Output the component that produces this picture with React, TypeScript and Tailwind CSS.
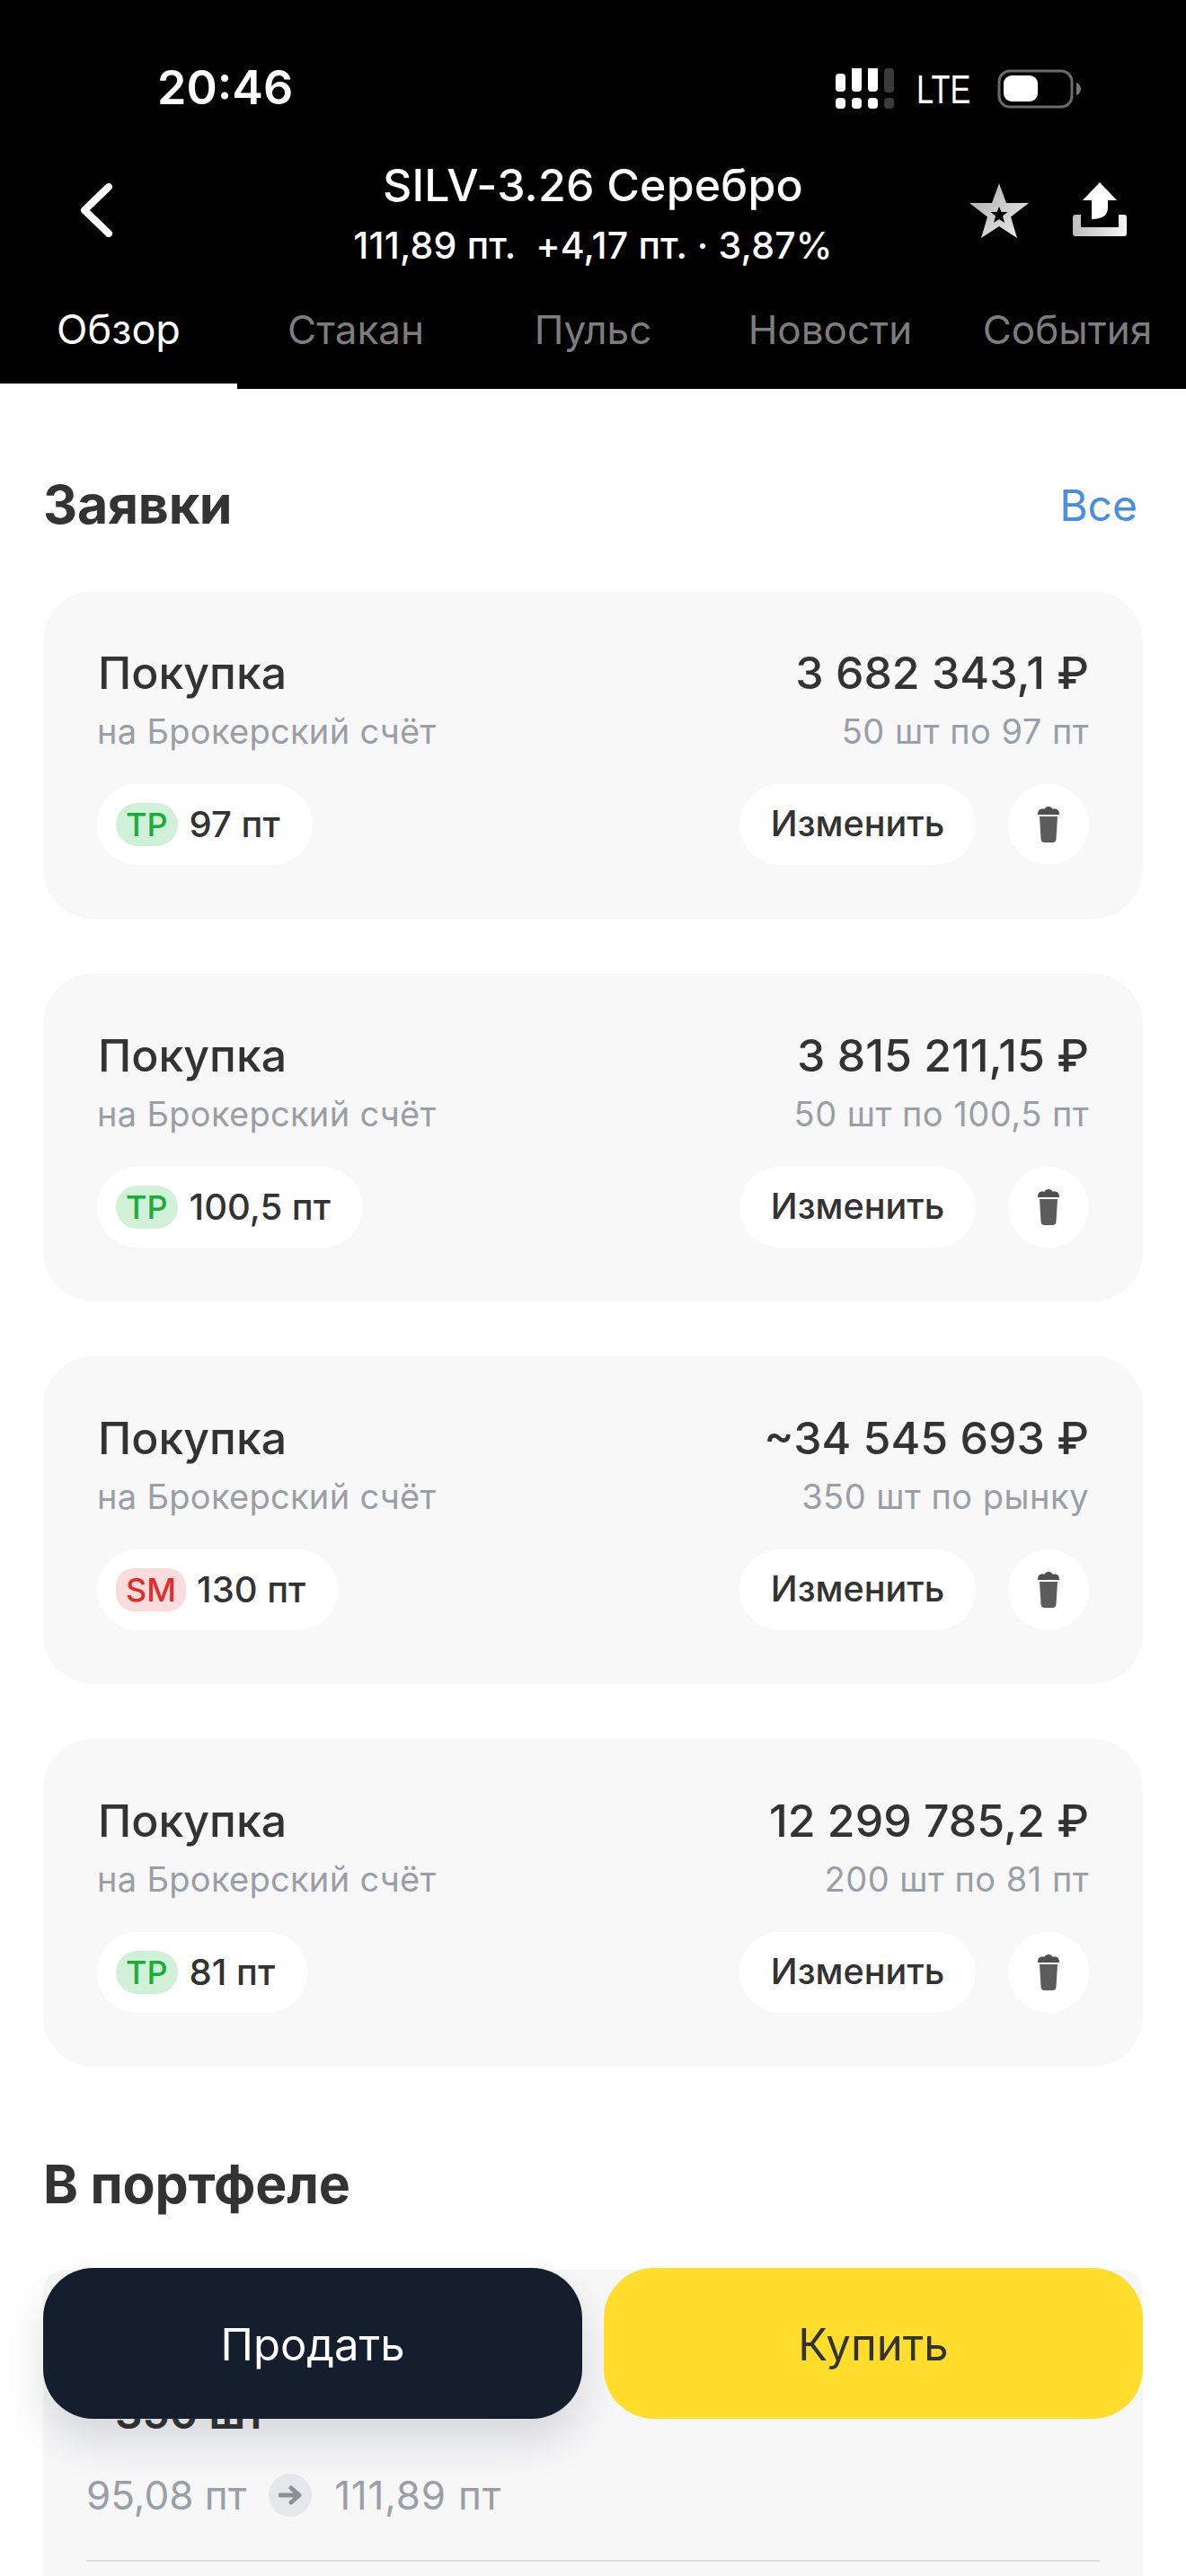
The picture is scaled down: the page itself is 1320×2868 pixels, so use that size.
const font = { fontFamily: '"Inter", "Noto Sans", sans-serif' };

const orders = [
  { amount: '3 682 343,1 ₽', sub: '50 шт по 97 пт', tag: 'TP', price: '97 пт' },
  { amount: '3 815 211,15 ₽', sub: '50 шт по 100,5 пт', tag: 'TP', price: '100,5 пт' },
  { amount: '~34 545 693 ₽', sub: '350 шт по рынку', tag: 'SM', price: '130 пт' },
  { amount: '12 299 785,2 ₽', sub: '200 шт по 81 пт', tag: 'TP', price: '81 пт' },
];

function Signal() {
  const white = [
    [0, 23, 11, 20], [18, 14, 11, 29], [36, 5, 11, 38],
    [0, 50, 11, 12], [18, 50, 11, 12], [36, 50, 11, 12],
  ];
  return (
    <svg width="66" height="46" viewBox="0 0 66 46" className="block">
      <g transform="translate(0 -17)">
        {white.map(([x, y, w, h], i) => (
          <rect key={i} x={x} y={y} width={w} height={h} rx="4" fill="#fff" />
        ))}
        <rect x="54" y="17" width="11" height="27" rx="4" fill="#3a3a3a" />
        <rect x="54" y="50" width="11" height="12" rx="4" fill="#3a3a3a" />
      </g>
    </svg>
  );
}

function Battery() {
  return (
    <svg width="93" height="44" viewBox="0 0 93 44" className="block">
      <rect x="2" y="2" width="81" height="40" rx="12" fill="none" stroke="#6a6a6a" strokeWidth="3" />
      <rect x="7" y="7" width="38" height="29" rx="9" fill="#fff" />
      <path d="M88 15 C91 16 93 19 93 22 C93 25 91 28 88 29 Z" fill="#777" />
    </svg>
  );
}

function Star() {
  return (
    <svg width="68" height="64" viewBox="0 0 68 64" className="block">
      <defs>
        <linearGradient id="starG" x1="0" y1="0" x2="1" y2="1">
          <stop offset="0" stopColor="#a8a8a8" />
          <stop offset="1" stopColor="#f0f0f0" />
        </linearGradient>
      </defs>
      <path
        fillRule="evenodd"
        d="M33 1 L41 23 L66 23 L46 38.5 L53 62 L33 49 L13 62 L20 38.5 L0 23 L25 23 Z M33 27 L35.5 33 L42.5 33 L37 37.5 L39 45 L33 41 L27 45 L29 37.5 L23.5 33 L30.5 33 Z"
        fill="url(#starG)"
      />
    </svg>
  );
}

function Share() {
  return (
    <svg width="60" height="60" viewBox="0 0 60 60" className="block">
      <defs>
        <linearGradient id="shareG" x1="0" y1="0" x2="1" y2="0">
          <stop offset="0" stopColor="#bdbdbd" />
          <stop offset="1" stopColor="#f5f5f5" />
        </linearGradient>
      </defs>
      <path d="M0 39 a3 3 0 0 1 3 -3 h6 v14 h42 v-14 h6 a3 3 0 0 1 3 3 v18 a3 3 0 0 1 -3 3 h-54 a3 3 0 0 1 -3 -3 Z" fill="url(#shareG)" />
      <path d="M30 0 L49 20 L39 20 L39 28 C39 36 34 41 21 41 L21 20 L11 20 Z" fill="#fff" />
    </svg>
  );
}

function Trash() {
  return (
    <svg width="24" height="40" viewBox="0 0 24 40" className="block">
      <path d="M8 2.5 C8 1 9.5 0 12 0 C14.5 0 16 1 16 2.5 L19 2.5 C22 2.5 24 4.5 24 9 L0 9 C0 4.5 2 2.5 5 2.5 Z" fill="#4f4f4f" />
      <path d="M2 11 H22 L20.5 36 C20.4 38.5 19 40 16.5 40 H7.5 C5 40 3.6 38.5 3.5 36 Z" fill="#5c5c5c" />
    </svg>
  );
}

function OrderCard({ amount, sub, tag, price }: { amount: string; sub: string; tag: string; price: string }) {
  const isTp = tag === 'TP';
  return (
    <div className="h-[365px] rounded-[56px] bg-[#f8f8f8] px-[60px] pt-[59px] flex flex-col">
      <div className="flex items-start justify-between">
        <div className="flex flex-col">
          <span className="ml-[1px] text-[50px] leading-[64px] font-[550] text-[#333333]">Покупка</span>
          <span className="mt-[8px] text-[38px] leading-[50px] text-[#9a9ea6] tracking-[0.3px]">на Брокерский счёт</span>
        </div>
        <div className="flex flex-col items-end">
          <span className="text-[50px] leading-[64px] font-[550] text-[#333333]">{amount}</span>
          <span className="mt-[8px] text-[38px] leading-[50px] text-[#9a9ea6] tracking-[0.5px]">{sub}</span>
        </div>
      </div>
      <div className="mt-[34px] flex items-center justify-between">
        <div className="h-[90px] rounded-full bg-white flex items-center pl-[21px] pr-[36px]">
          <span
            className={
              isTp
                ? 'h-[48px] px-[11px] rounded-[24px] bg-[#d0f0d8] text-[#1cab3d] text-[36px] font-[550] flex items-center leading-none'
                : 'h-[48px] px-[11px] rounded-[20px] bg-[#fadcdc] text-[#e02c2c] text-[36px] font-[550] flex items-center leading-none'
            }
          >
            {tag}
          </span>
          <span className={isTp ? 'ml-[13px] text-[40px] font-[550] text-[#333333] leading-none' : 'ml-[12px] text-[40px] font-[550] text-[#333333] leading-none'}>{price}</span>
        </div>
        <div className="flex items-center gap-[36px]">
          <div className="h-[90px] w-[263px] rounded-full bg-white flex items-center justify-center text-[39.5px] font-[550] text-[#333333] leading-none">
            Изменить
          </div>
          <div className="h-[90px] w-[90px] rounded-full bg-white flex items-center justify-center">
            <Trash />
          </div>
        </div>
      </div>
    </div>
  );
}

export default function App() {
  return (
    <div style={font} className="relative w-[1320px] h-[2868px] overflow-hidden bg-white">
      <header className="h-[433px] bg-black flex flex-col text-white">
        <div className="h-[178px] flex items-start justify-between pl-[175px] pr-[117px]">
          <span className="mt-[66px] text-[52px] leading-[64px] font-semibold">20:46</span>
          <div className="mt-[74px] flex items-center">
            <Signal />
            <span className="ml-[24px] mt-[3px] w-[90px] text-[44px] leading-[46px] font-normal scale-x-[0.78] origin-left" style={{ fontFamily: '"Liberation Sans", sans-serif' }}>LTE</span>
            <Battery />
          </div>
        </div>
        <div className="h-[130px] grid grid-cols-[1fr_auto_1fr] items-start px-[66px]">
          <svg width="38" height="60" viewBox="0 0 38 60" className="ml-[22px] mt-[26px] block">
            <path d="M33 4 L6 30 L33 56" fill="none" stroke="#fff" strokeWidth="8" strokeLinecap="round" strokeLinejoin="round" />
          </svg>
          <div className="flex flex-col items-center">
            <span className="text-[50px] leading-[56px] font-medium tracking-[0.2px] whitespace-nowrap">SILV-3.26 Серебро</span>
            <span className="mt-[14px] text-[41px] leading-[50px] font-medium tracking-[0.2px] whitespace-pre">111,89 пт.  +4,17 пт. · 3,87%</span>
          </div>
          <div className="mt-[25px] flex items-start justify-end gap-[47px]">
            <Star />
            <Share />
          </div>
        </div>
        <nav className="flex-1 grid grid-cols-5">
          {['Обзор', 'Стакан', 'Пульс', 'Новости', 'События'].map((t, i) => (
            <div
              key={t}
              className={
                i === 0
                  ? 'border-b-[6px] border-white flex items-start justify-center pt-[31px] text-[45px] leading-[56px] text-white'
                  : 'flex items-start justify-center pt-[31px] text-[44px] leading-[56px] text-[#7d7d7d]'
              }
            >
              {t}
            </div>
          ))}
        </nav>
      </header>

      <main className="px-[48px]">
        <div className="h-[225px] flex items-start justify-between pt-[96px]">
          <h2 className="text-[59px] leading-[66px] font-bold text-[#333333] tracking-[-0.2px]">Заявки</h2>
          <span className="mr-[6px] mt-[1px] text-[48px] leading-[66px] text-[#4a8fdd]">Все</span>
        </div>
        <div className="flex flex-col gap-[61px]">
          {orders.map((o, i) => (
            <OrderCard key={i} {...o} />
          ))}
        </div>
        <h2 className="mt-[98px] text-[59px] leading-[66px] font-bold text-[#333333] tracking-[-0.2px]">В портфеле</h2>
        <section className="mt-[62px] h-[400px] rounded-t-[24px] bg-[#f7f7f8] px-[48px] pt-[128px]">
          <div className="text-[48px] leading-[64px] font-semibold text-[#333333]">−350 шт</div>
          <div className="mt-[35px] flex items-center h-[48px] text-[44px] text-[#9a9ea6] leading-none">
            <span>95,08 пт</span>
            <span className="mx-[25px] h-[48px] w-[48px] rounded-full bg-[#e6e7ea] flex items-center justify-center">
              <svg width="26" height="22" viewBox="0 0 26 22" className="block">
                <path d="M2 11 H22 M14 3 L23 11 L14 19" fill="none" stroke="#8d9096" strokeWidth="5" strokeLinecap="round" strokeLinejoin="round" />
              </svg>
            </span>
            <span className="tracking-[0.8px]">111,89 пт</span>
          </div>
          <div className="mt-[48px] h-[2px] bg-[#dcdde0]" />
        </section>
      </main>

      <div className="absolute left-[48px] right-[48px] top-[2525px] flex gap-[24px]">
        <button className="h-[168px] pt-[4px] flex-1 rounded-[56px] bg-[#141e2d] text-white text-[49px] shadow-[0_24px_48px_rgba(20,30,45,0.14)]">
          Продать
        </button>
        <button className="h-[168px] pt-[4px] flex-1 rounded-[56px] bg-[#ffdd2d] text-[#333333] text-[49px]">
          Купить
        </button>
      </div>
    </div>
  );
}
